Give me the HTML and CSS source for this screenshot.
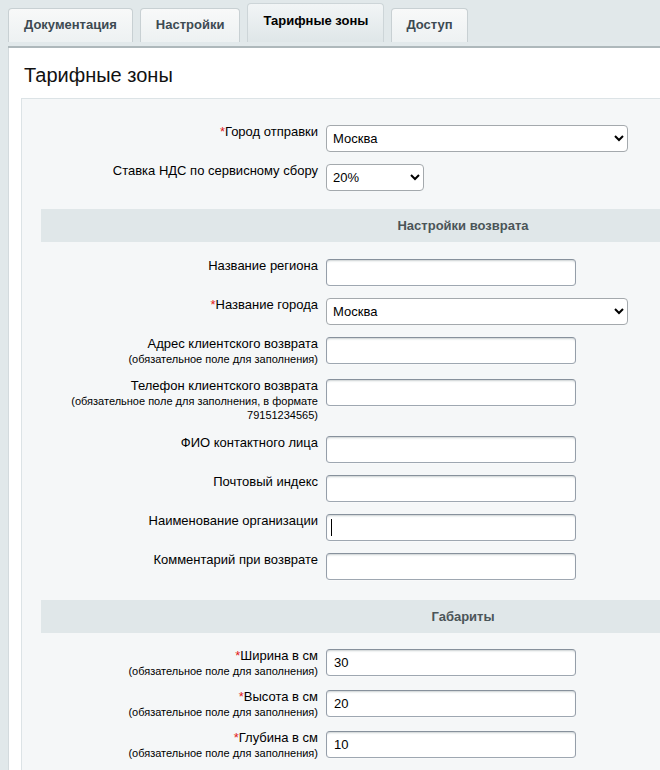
FILE: index.html
```html
<!DOCTYPE html>
<html lang="ru">
<head>
<meta charset="utf-8">
<title>Тарифные зоны</title>
<link rel="stylesheet" href="styles.css">
</head>
<body>
<div class="tabs">
  <div class="tab">Документация</div>
  <div class="tab">Настройки</div>
  <div class="tab active">Тарифные зоны</div>
  <div class="tab tab-last">Доступ</div>
</div>
<div class="tabline"></div>
<div class="panel">
  <h1 class="title">Тарифные зоны</h1>
  <div class="content">
    <div class="form">
      <div class="row">
        <div class="label"><span class="req">*</span>Город отправки</div>
        <div class="field"><select class="sel sel-wide"><option>Москва</option></select></div>
      </div>
      <div class="row">
        <div class="label">Ставка НДС по сервисному сбору</div>
        <div class="field"><select class="sel sel-small"><option>20%</option></select></div>
      </div>

      <div class="section section-first">Настройки возврата</div>

      <div class="row">
        <div class="label">Название региона</div>
        <div class="field"><input class="inp" type="text"></div>
      </div>
      <div class="row">
        <div class="label"><span class="req">*</span>Название города</div>
        <div class="field"><select class="sel sel-wide"><option>Москва</option></select></div>
      </div>
      <div class="row">
        <div class="label">Адрес клиентского возврата<span class="sub">(обязательное поле для заполнения)</span></div>
        <div class="field"><input class="inp" type="text"></div>
      </div>
      <div class="row">
        <div class="label label-tall">Телефон клиентского возврата<span class="sub">(обязательное поле для заполнения, в формате<br>79151234565)</span></div>
        <div class="field"><input class="inp" type="text"></div>
      </div>
      <div class="row">
        <div class="label">ФИО контактного лица</div>
        <div class="field"><input class="inp" type="text"></div>
      </div>
      <div class="row">
        <div class="label">Почтовый индекс</div>
        <div class="field"><input class="inp" type="text"></div>
      </div>
      <div class="row">
        <div class="label">Наименование организации</div>
        <div class="field"><span class="caretwrap"><input class="inp" type="text"><span class="caret"></span></span></div>
      </div>
      <div class="row">
        <div class="label">Комментарий при возврате</div>
        <div class="field"><input class="inp" type="text"></div>
      </div>

      <div class="section">Габариты</div>

      <div class="row row-dim">
        <div class="label"><span class="req">*</span>Ширина в см<span class="sub">(обязательное поле для заполнения)</span></div>
        <div class="field"><input class="inp" type="text" value="30"></div>
      </div>
      <div class="row row-dim">
        <div class="label"><span class="req">*</span>Высота в см<span class="sub">(обязательное поле для заполнения)</span></div>
        <div class="field"><input class="inp" type="text" value="20"></div>
      </div>
      <div class="row row-dim">
        <div class="label"><span class="req">*</span>Глубина в см<span class="sub">(обязательное поле для заполнения)</span></div>
        <div class="field"><input class="inp" type="text" value="10"></div>
      </div>
    </div>
  </div>
</div>
</body>
</html>
```
FILE: styles.css
```css
html, body {
  margin: 0;
  padding: 0;
  height: 100%;
  overflow: hidden;
}
body {
  background: #e1e8ea;
  font-family: "Liberation Sans", Arial, sans-serif;
  font-size: 13px;
  color: #000;
}

/* Tabs */
.tabs {
  display: flex;
  align-items: flex-end;
  gap: 7px;
  padding: 3px 0 0 8px;
  height: 39px;
}
.tab {
  box-sizing: border-box;
  height: 34px;
  line-height: 32px;
  padding: 0 15px;
  border: 1px solid #c8d0d3;
  border-bottom: none;
  border-radius: 4px 4px 0 0;
  background: linear-gradient(#f8f9f9, #edf1f2);
  color: #3d4a52;
  font-weight: bold;
  font-size: 13px;
  white-space: nowrap;
}
.tab.active {
  height: 39px;
  padding: 1px 15px 5px 15px;
  background: linear-gradient(#f2f5f6, #dfe6e8);
  border-color: #cdd5d8;
  color: #000;
}
.tab-last {
  padding: 0 14px;
}
.tabline {
  margin-left: 8px;
  height: 4px;
  background: #e2e9eb;
  border-bottom: 2px solid #aeb8bb;
}

/* Panel */
.panel {
  margin-left: 8px;
  width: 1000px;
  min-height: 800px;
  background: #fff;
  border-left: 1px solid #d3dadd;
}
.title {
  margin: 0;
  padding: 15px 0 0 15px;
  height: 35px;
  font-size: 20px;
  line-height: 24px;
  font-weight: normal;
  color: #111;
}
.content {
  margin-left: 12px;
  background: #f5f7f8;
  border-top: 1px solid #dce3e6;
  border-left: 1px solid #dce3e6;
  padding: 20px 0 40px 19px;
  min-height: 700px;
}
.form {
  width: 844px;
}

/* Rows */
.row {
  display: flex;
  align-items: flex-start;
}
.label {
  box-sizing: border-box;
  width: 285px;
  flex: none;
  padding: 5px 8px 7px 0;
  text-align: right;
  line-height: 16px;
  font-size: 13px;
}
.label-tall {
  padding-bottom: 8px;
}
.row-dim .label {
  padding-top: 4px;
  padding-bottom: 7px;
}
.row-dim .field {
  padding-top: 5px;
}
.req {
  color: #e21a1a;
}
.sub {
  display: block;
  font-size: 11px;
  line-height: 14px;
}
.field {
  padding: 6px 0;
}

/* Controls */
.inp {
  box-sizing: border-box;
  display: block;
  width: 250px;
  height: 27px;
  margin: 0;
  padding: 0 7px;
  background: #fff;
  border: 1px solid;
  border-color: #87919c #959ea9 #9ea7b1 #959ea9;
  border-radius: 4px;
  box-shadow: 0 1px 0 0 rgba(255,255,255,0.3), inset 0 2px 2px -1px rgba(180,188,191,0.7);
  font-family: "Liberation Sans", Arial, sans-serif;
  font-size: 13px;
  color: #000;
  outline: none;
}
.sel {
  box-sizing: border-box;
  display: block;
  height: 27px;
  margin: 0;
  padding: 0 4px 0 2px;
  background-color: #fff;
  border: 1px solid #a4a9ad;
  border-radius: 4px;
  font-family: "Liberation Sans", Arial, sans-serif;
  font-size: 13px;
  color: #000;
}
.sel-wide {
  width: 302px;
}
.sel-small {
  width: 98px;
}
.caretwrap {
  position: relative;
  display: block;
}
.caret {
  position: absolute;
  left: 5px;
  top: 5px;
  width: 1px;
  height: 17px;
  background: #000;
}

/* Sections */
.section {
  margin: 14px 0 11px 0;
  height: 33px;
  line-height: 33px;
  background: #e0e7e9;
  text-align: center;
  font-weight: bold;
  font-size: 13px;
  color: #4b5558;
}
.section-first {
  margin-top: 12px;
}
```
